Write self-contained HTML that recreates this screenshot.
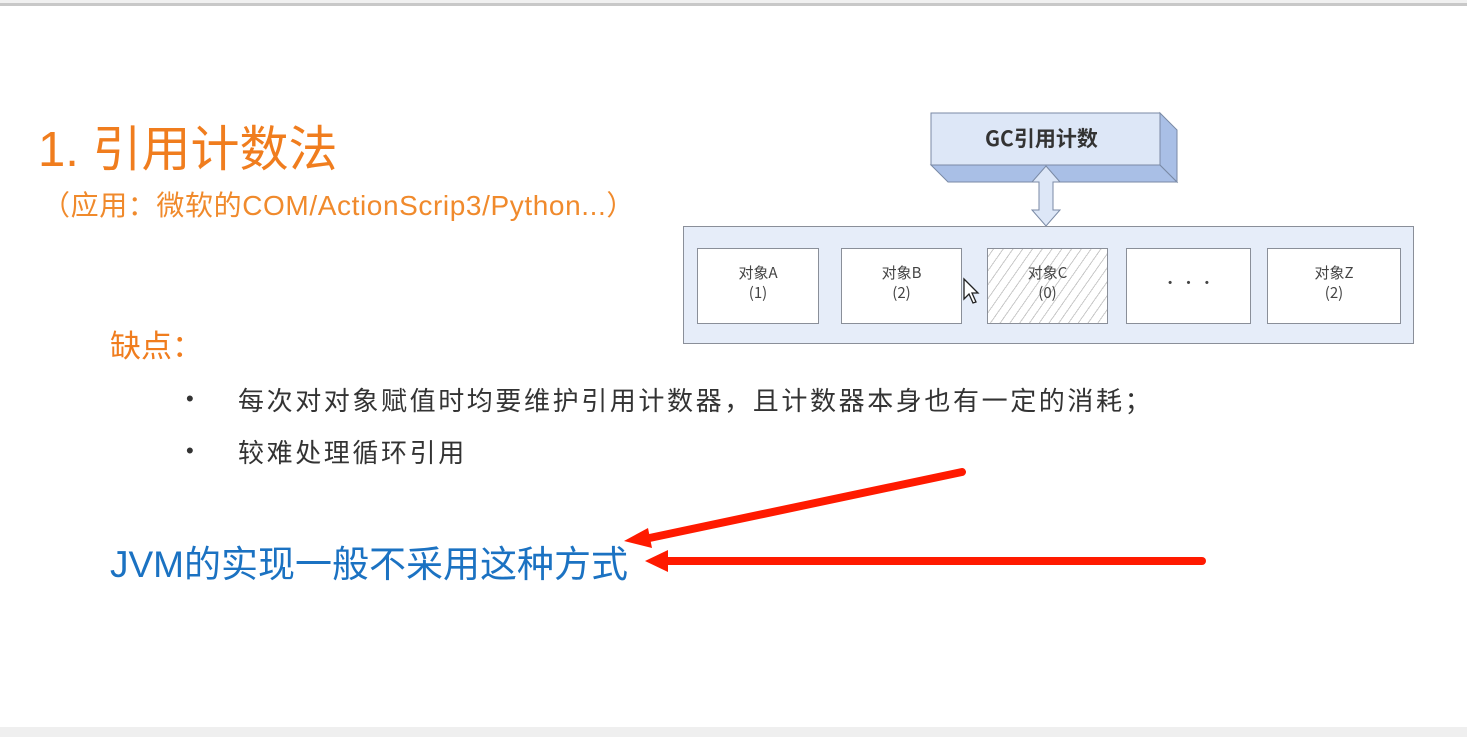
<!DOCTYPE html>
<html><head><meta charset="utf-8"><style>
body{margin:0;width:1467px;height:737px;background:#fff;position:relative;overflow:hidden;font-family:"Liberation Sans","Noto Sans CJK SC",sans-serif}
.t{position:absolute;white-space:nowrap;line-height:1}
.bx{position:absolute;background:#fff;border:1.5px solid #8a8f99;box-sizing:border-box;font-size:15px;color:#444;text-align:center;line-height:20px;padding-top:14px;font-family:"Noto Sans CJK SC",sans-serif}
</style></head><body>
<div style="position:absolute;left:0;top:0;width:1467px;height:3px;background:#f0f0f0"></div>
<div style="position:absolute;left:0;top:3px;width:1467px;height:3px;background:#c8c8c8"></div>
<div style="position:absolute;left:0;top:727px;width:1467px;height:10px;background:#efefef"></div>

<div class="t" style="left:38px;top:126px;font-size:49px;color:#f07d1e">1. 引用计数法</div>
<div class="t" style="left:42px;top:192px;font-size:28px;letter-spacing:0.6px;color:#f08a2c">（应用：微软的COM/ActionScrip3/Python...）</div>
<div class="t" style="left:110px;top:331px;font-size:31px;color:#f07d1e">缺点：</div>
<div class="t" style="left:186px;top:388px;font-size:22px;color:#333">•</div>
<div class="t" style="left:238px;top:388px;font-size:26px;letter-spacing:2.6px;color:#333">每次对对象赋值时均要维护引用计数器，且计数器本身也有一定的消耗；</div>
<div class="t" style="left:186px;top:440px;font-size:22px;color:#333">•</div>
<div class="t" style="left:238px;top:440px;font-size:26px;letter-spacing:2.6px;color:#333">较难处理循环引用</div>
<div class="t" style="left:110px;top:546px;font-size:37px;color:#1b72c2">JVM的实现一般不采用这种方式</div>

<svg style="position:absolute;left:0;top:0" width="1467" height="737">
<polygon points="931,165 1160,165 1177,182 948,182" fill="#a9bfe6" stroke="#7a8aa5"/>
<polygon points="1160,113 1177,130 1177,182 1160,165" fill="#a9bfe6" stroke="#7a8aa5"/>
<rect x="931" y="113" width="229" height="52" fill="#dde7f7" stroke="#7a8aa5"/>
<polygon points="1046,166 1060,182 1053,182 1053,210 1060,210 1046,226 1032,210 1039,210 1039,182 1032,182" fill="#dde7f7" stroke="#7a8aa5"/>
<rect x="683.5" y="226.5" width="730" height="117" fill="#e6edf9" stroke="#8a8f99"/>
<g stroke="#ff1a00" stroke-width="8" stroke-linecap="round" fill="none">
<line x1="962" y1="472" x2="640" y2="540"/>
<line x1="1202" y1="561" x2="660" y2="561"/>
</g>
<polygon points="624,541 648,528 652,548" fill="#ff1a00"/>
<polygon points="645,561 668,550 668,572" fill="#ff1a00"/>
</svg>
<div class="t" style="left:985px;top:128px;font-size:21px;font-weight:bold;color:#333;font-family:'Noto Sans CJK SC',sans-serif">GC引用计数</div>

<div class="bx" style="left:697px;top:248px;width:122px;height:76px">对象A<br>(1)</div>
<div class="bx" style="left:841px;top:248px;width:121px;height:76px">对象B<br>(2)</div>
<div class="bx" style="left:987px;top:248px;width:121px;height:76px;background:repeating-linear-gradient(-55deg,#fff 0 7px,#c9c9c9 7px 8px)">对象C<br>(0)</div>
<div class="bx" style="left:1126px;top:248px;width:125px;height:76px;padding-top:24px">· · ·</div>
<div class="bx" style="left:1267px;top:248px;width:134px;height:76px">对象Z<br>(2)</div>
<svg style="position:absolute;left:962px;top:277px" width="18" height="28"><path d="M2 2 L2 22 L7 17 L11 26 L14 25 L10 16 L16 16 Z" fill="#fff" stroke="#222" stroke-width="1.3"/></svg>
</body></html>
